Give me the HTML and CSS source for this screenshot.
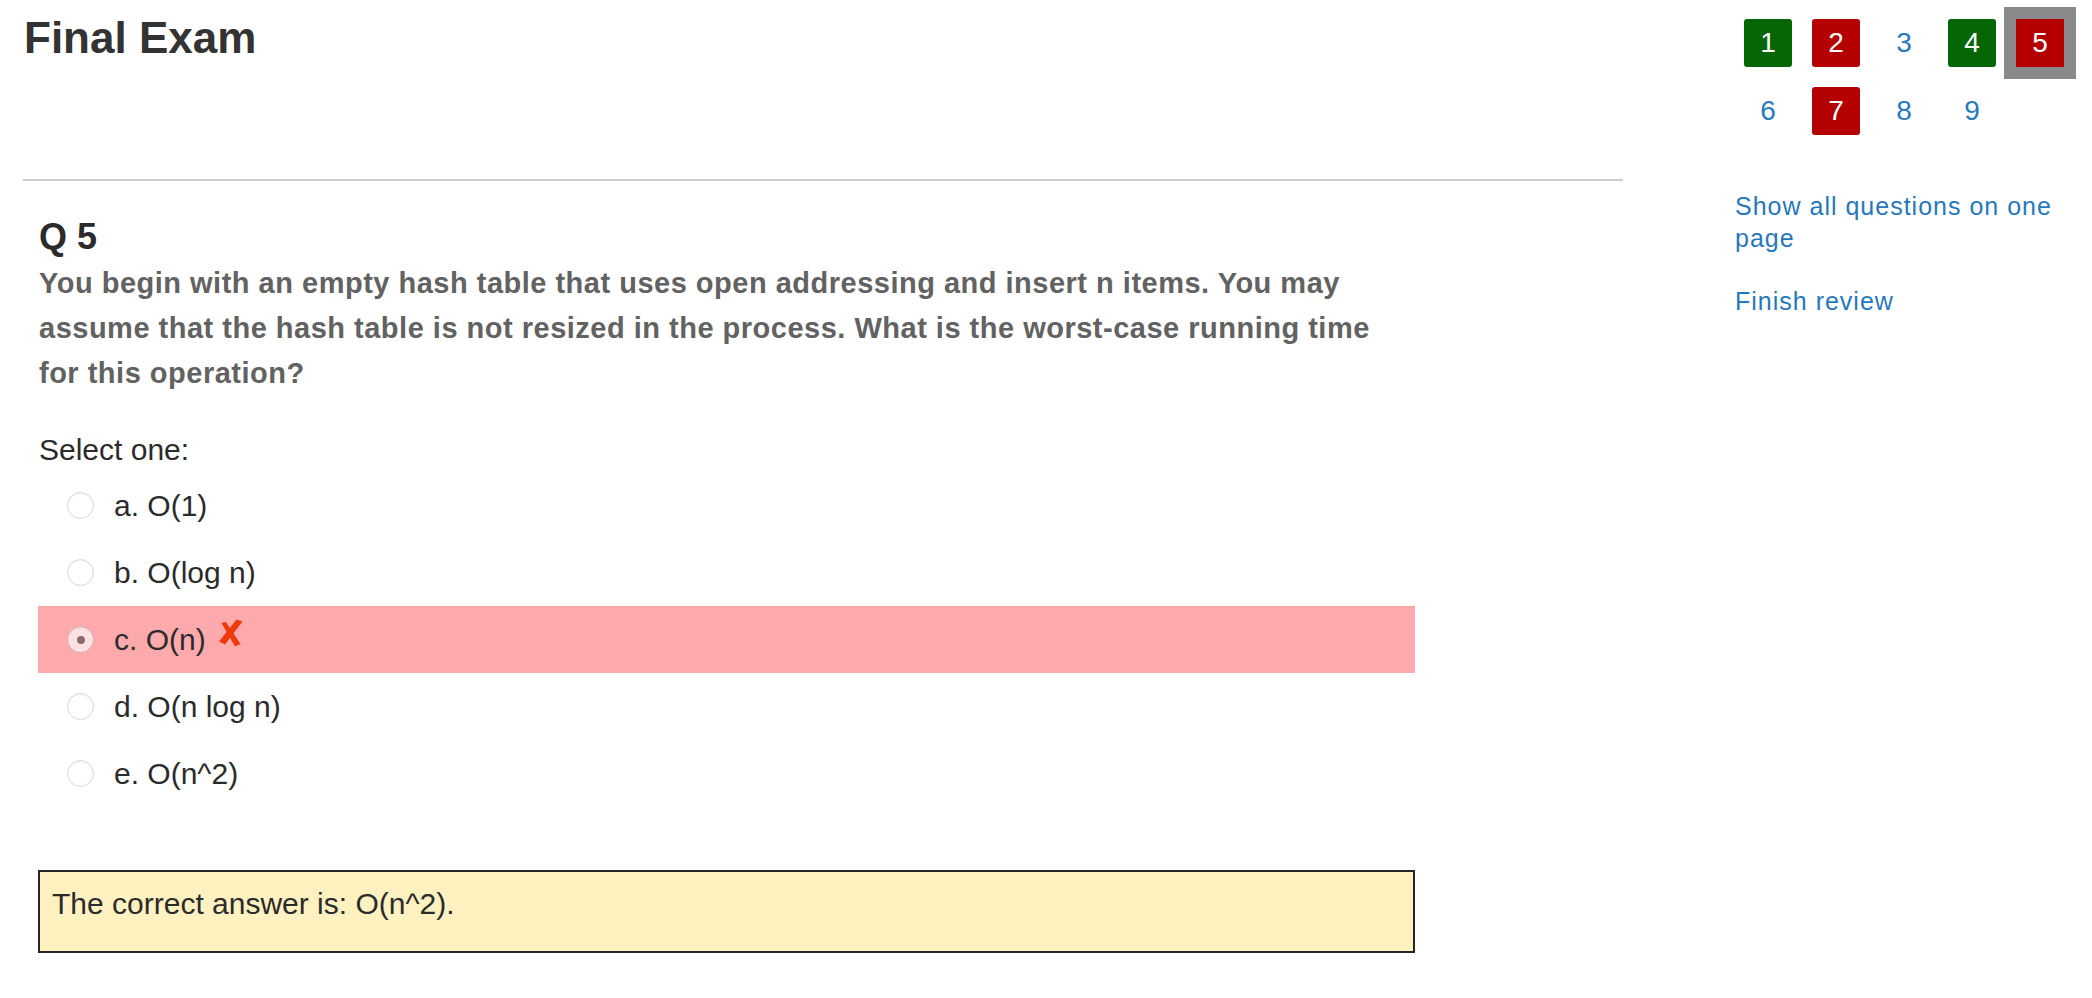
FILE: index.html
```html
<!DOCTYPE html>
<html>
<head>
<meta charset="utf-8">
<title>Final Exam</title>
<link rel="stylesheet" href="styles.css">
</head>
<body>
<div class="page">
  <main class="main">
    <header class="page-header">
      <h1 class="title">Final Exam</h1>
    </header>
    <section class="question">
      <h2 class="qno">Q 5</h2>
      <p class="qtext">You begin with an empty hash table that uses open addressing and insert n items. You may assume that the hash table is not resized in the process. What is the worst-case running time for this operation?</p>
      <div class="prompt">Select one:</div>
      <div class="answers">
        <div class="opt"><span class="radio"></span><span class="label">a. O(1)</span></div>
        <div class="opt"><span class="radio"></span><span class="label">b. O(log n)</span></div>
        <div class="opt incorrect"><span class="radio checked"></span><span class="label">c. O(n)</span>
          <svg class="xmark" width="25" height="28" viewBox="0 0 25 28"><polygon points="18.5,0.5 24.5,2.5 7,25.5 1,22.5" fill="#ef3a10"/><polygon points="3.5,4 8,3 22.5,25 17,27.5" fill="#ef3a10"/></svg>
        </div>
        <div class="opt"><span class="radio"></span><span class="label">d. O(n log n)</span></div>
        <div class="opt"><span class="radio"></span><span class="label">e. O(n^2)</span></div>
      </div>
      <div class="rightanswer">The correct answer is: O(n^2).</div>
    </section>
  </main>
  <aside class="sidebar">
    <div class="qnav">
      <span class="qbtn correct">1</span>
      <span class="qbtn wrong">2</span>
      <span class="qbtn plain">3</span>
      <span class="qbtn correct">4</span>
      <span class="qbtn wrong current">5</span>
      <span class="qbtn plain">6</span>
      <span class="qbtn wrong">7</span>
      <span class="qbtn plain">8</span>
      <span class="qbtn plain">9</span>
    </div>
    <a class="navlink first" href="#">Show all questions on one page</a>
    <a class="navlink" href="#">Finish review</a>
  </aside>
</div>
</body>
</html>
```

FILE: styles.css
```css
html, body {
  margin: 0;
  padding: 0;
  background: #ffffff;
}
body {
  font-family: "Liberation Sans", Arial, sans-serif;
  color: #333333;
}
.page {
  display: flex;
  align-items: flex-start;
  padding-left: 23px;
}
.main {
  width: 1600px;
  flex: none;
}
.page-header {
  height: 168px;
  padding-top: 11px;
  border-bottom: 2px solid #cdcdcd;
}
.title {
  margin: 0 0 0 1px;
  font-size: 44px;
  line-height: 53px;
  font-weight: bold;
  color: #333333;
}
.question {
  padding-left: 15px;
  width: 1377px;
}
.qno {
  margin: 34px 0 0 1px;
  font-size: 36px;
  line-height: 43px;
  font-weight: bold;
  color: #2b2b2b;
}
.qtext {
  margin: 3px 0 0 1px;
  font-size: 29px;
  line-height: 45px;
  letter-spacing: 0.5px;
  font-weight: bold;
  color: #626262;
}
.prompt {
  margin: 31px 0 0 1px;
  font-size: 30px;
  line-height: 45px;
  color: #2b2b2b;
}
.answers {
  display: flex;
  flex-direction: column;
}
.opt {
  height: 67px;
  display: flex;
  align-items: center;
  padding-left: 29px;
  font-size: 30px;
  color: #2b2b2b;
}
.opt.incorrect {
  background: #fea9ac;
}
.radio {
  width: 25px;
  height: 25px;
  border: 1px solid #d8d8d8;
  border-radius: 50%;
  background: #ffffff;
  box-shadow: inset 0 1px 2px rgba(0,0,0,0.06);
  margin-right: 20px;
  position: relative;
  flex: none;
}
.radio.checked {
  background: #fde1e3;
  border-color: #d2aeb1;
}
.radio.checked::after {
  content: "";
  position: absolute;
  left: 8.5px;
  top: 8.5px;
  width: 8px;
  height: 8px;
  border-radius: 50%;
  background: #8a6b6e;
}
.xmark {
  margin-left: 12px;
  margin-top: -14px;
}
.rightanswer {
  margin-top: 63px;
  border: 2px solid #262626;
  background: #fff2c0;
  padding: 9px 12px 25px;
  font-size: 30px;
  line-height: 45px;
  color: #2b2b2b;
}
.sidebar {
  margin-left: 112px;
  width: 340px;
  flex: none;
  display: flex;
  flex-direction: column;
  align-items: flex-start;
}
.qnav {
  margin-top: 19px;
  margin-left: 9px;
  display: grid;
  grid-template-columns: repeat(5, 48px);
  grid-auto-rows: 48px;
  column-gap: 20px;
  row-gap: 20px;
}
.qbtn {
  display: flex;
  align-items: center;
  justify-content: center;
  font-size: 28px;
  border-radius: 3px;
  color: #ffffff;
}
.qbtn.correct {
  background: #056605;
}
.qbtn.wrong {
  background: #b40000;
}
.qbtn.plain {
  color: #2a7abb;
}
.qbtn.current {
  border-radius: 0;
  outline: 12px solid #898989;
}
.navlink {
  font-size: 25px;
  line-height: 32px;
  letter-spacing: 1px;
  color: #2778bb;
  text-decoration: none;
}
.navlink.first {
  margin-top: 55px;
}
.navlink + .navlink {
  margin-top: 31px;
}
```
